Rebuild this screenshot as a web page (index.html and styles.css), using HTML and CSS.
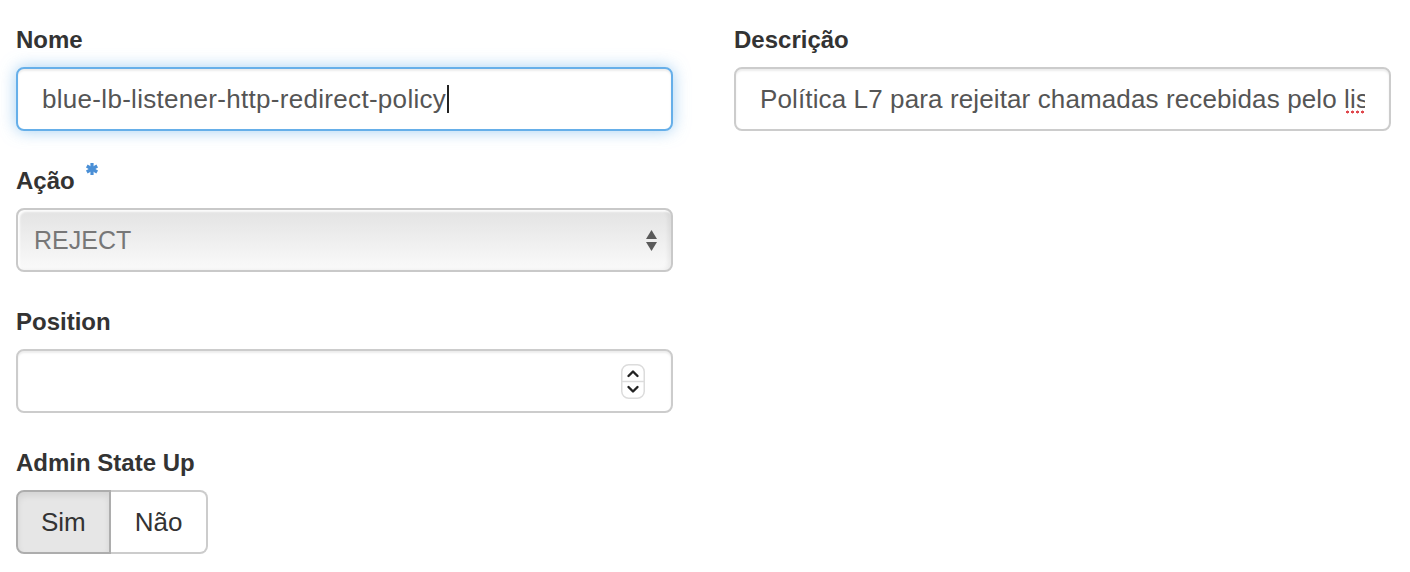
FILE: index.html
```html
<!DOCTYPE html>
<html lang="pt">
<head>
<meta charset="utf-8">
<title>L7 Policy</title>
<link rel="stylesheet" href="styles.css">
</head>
<body>
<form class="form">
  <div class="col">
    <div class="group">
      <label class="label">Nome</label>
      <div class="control focused">
        <span class="text">blue-lb-listener-http-redirect-policy</span><span class="caret"></span>
      </div>
    </div>
    <div class="group">
      <label class="label">Ação
        <svg class="req" width="12" height="12" viewBox="0 0 12 12" aria-hidden="true">
          <g stroke="#4a8fd6" stroke-width="3.2">
            <line x1="6" y1="0" x2="6" y2="12"/>
            <line x1="0.8" y1="3" x2="11.2" y2="9"/>
            <line x1="0.8" y1="9" x2="11.2" y2="3"/>
          </g>
        </svg>
      </label>
      <div class="control select">
        <span class="text">REJECT</span>
        <svg class="arrows" width="11" height="21" viewBox="0 0 11 21" aria-hidden="true">
          <polygon points="0,9 5.5,0 11,9" fill="#5a5a5a"/>
          <polygon points="0,12 11,12 5.5,21" fill="#5a5a5a"/>
        </svg>
      </div>
    </div>
    <div class="group">
      <label class="label">Position</label>
      <div class="control number">
        <span class="text"></span>
        <svg class="spinner" width="24" height="35" viewBox="0 0 24 35" aria-hidden="true">
          <rect x="0.75" y="0.75" width="22.5" height="33.5" rx="7" fill="#fff" stroke="#dcdcdc" stroke-width="1.5"/>
          <line x1="1" y1="17.5" x2="23" y2="17.5" stroke="#dcdcdc" stroke-width="1.5"/>
          <polyline points="7.5,12 12,7.5 16.5,12" fill="none" stroke="#222" stroke-width="2.4" stroke-linecap="round" stroke-linejoin="round"/>
          <polyline points="7.5,23 12,27.5 16.5,23" fill="none" stroke="#222" stroke-width="2.4" stroke-linecap="round" stroke-linejoin="round"/>
        </svg>
      </div>
    </div>
    <div class="group">
      <label class="label">Admin State Up</label>
      <div class="btn-group">
        <span class="btn active">Sim</span><span class="btn">Não</span>
      </div>
    </div>
  </div>
  <div class="col">
    <div class="group">
      <label class="label">Descrição</label>
      <div class="control desc">
        <span class="text">Política L7 para rejeitar chamadas recebidas pelo <span class="spell">listener</span></span>
      </div>
    </div>
  </div>
</form>
</body>
</html>
```
FILE: styles.css
```css
html, body {
  margin: 0;
  padding: 0;
  background: #fff;
}
body {
  font-family: "Liberation Sans", Arial, Helvetica, sans-serif;
  font-size: 24px;
  color: #333;
}
.form {
  display: grid;
  grid-template-columns: 657px 657px;
  column-gap: 61px;
  padding: 23px 19px 0 16px;
  align-items: start;
}
.group {
  margin-bottom: 33px;
}
.label {
  display: flex;
  align-items: flex-start;
  gap: 11px;
  font-weight: bold;
  font-size: 24px;
  line-height: 34px;
  color: #333;
  margin-bottom: 10px;
}
.req {
  margin-top: -1px;
}
.control {
  box-sizing: border-box;
  height: 64px;
  border: 2px solid #cccccc;
  border-radius: 8px;
  padding: 0 24px;
  display: flex;
  align-items: center;
  background: #fff;
  color: #555;
  font-size: 26px;
  letter-spacing: 0.3px;
  line-height: 34px;
  box-shadow: inset 0 2px 2px rgba(0, 0, 0, 0.075);
}
.control .text {
  flex: 1;
  min-width: 0;
  overflow: hidden;
  white-space: nowrap;
}
.desc {
  letter-spacing: 0.12px;
}
.focused {
  border-color: #66afe9;
  box-shadow: inset 0 2px 2px rgba(0, 0, 0, 0.075), 0 0 16px rgba(102, 175, 233, 0.6);
}
.focused .text {
  flex: 0 0 auto;
}
.caret {
  display: inline-block;
  width: 2px;
  height: 28px;
  background: #222;
  margin-left: 1px;
}
.select {
  padding: 0 14px 0 16px;
  color: #777;
  font-size: 25px;
  letter-spacing: 0;
  background: linear-gradient(#e3e3e3, #f3f3f3 70%, #fafafa);
  border-color: #c9c9c9;
  box-shadow: inset 2px 2px 2px rgba(255, 255, 255, 0.9), inset -3px 0 4px rgba(0, 0, 0, 0.06);
}
.number {
  padding: 0 26px 0 24px;
}
.spell {
  background-image: radial-gradient(circle, #e0474c 1.3px, transparent 1.7px);
  background-size: 5px 4px;
  background-repeat: repeat-x;
  background-position: 1px 100%;
}
.btn-group {
  display: flex;
}
.btn {
  box-sizing: border-box;
  height: 64px;
  display: flex;
  align-items: center;
  justify-content: center;
  padding: 0 24px;
  border: 2px solid #cccccc;
  border-left: none;
  border-radius: 0 8px 8px 0;
  background: #fff;
  color: #333;
  font-size: 26px;
}
.btn.active {
  padding: 0 23px;
  border: 2px solid #adadad;
  border-radius: 8px 0 0 8px;
  background: #e6e6e6;
  box-shadow: inset 0 4px 6px rgba(0, 0, 0, 0.08);
}
```
